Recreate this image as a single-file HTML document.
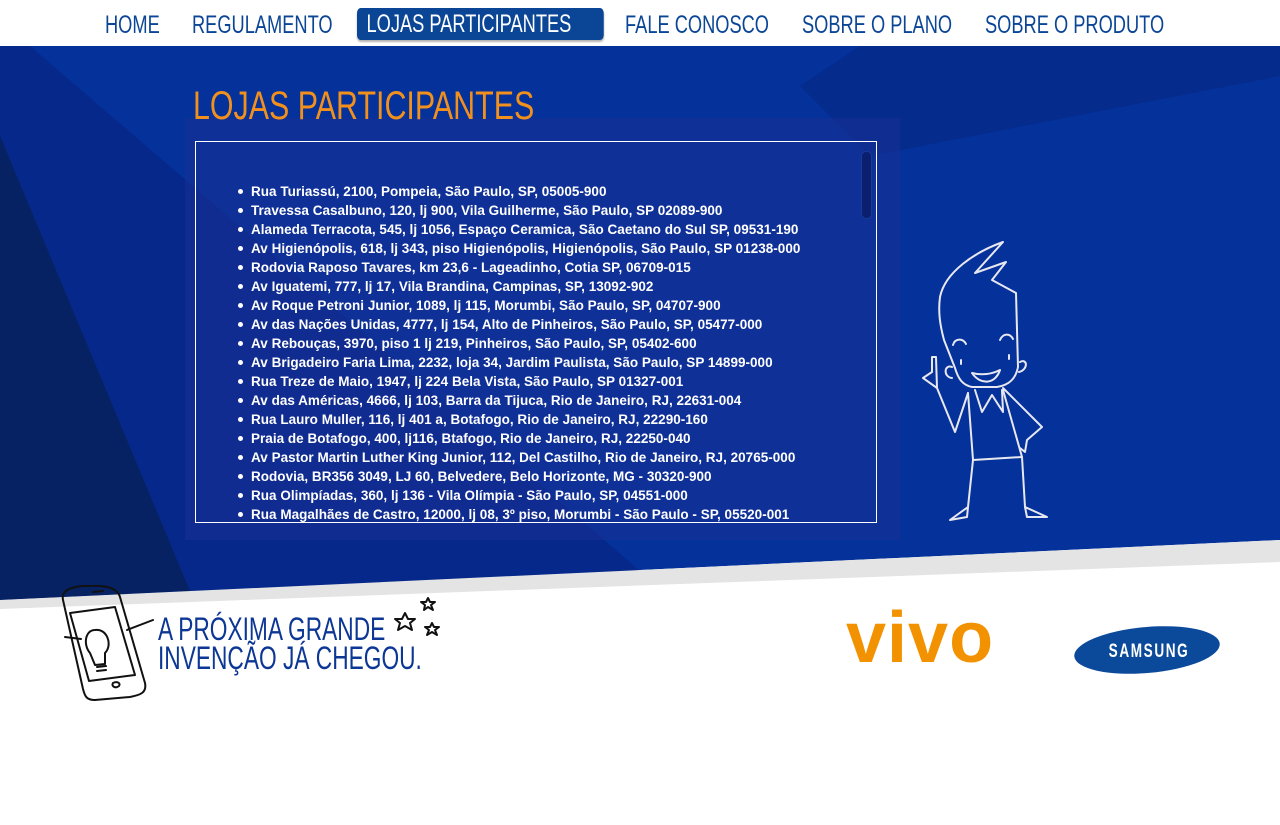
<!DOCTYPE html>
<html><head><meta charset="utf-8"><style>
*{margin:0;padding:0;box-sizing:border-box}
body{width:1280px;height:825px;background:#fff;position:relative;overflow:hidden;font-family:"Liberation Sans",sans-serif}
.nav{position:absolute;top:0;left:0;width:1280px;height:46px;background:#fff}
.nav span{position:absolute;top:9px;height:32px;line-height:32px;font-size:25px;color:#0a4596;transform-origin:0 0;transform:scaleX(0.73);white-space:nowrap}
.nav .act{background:#0a4596;color:#fff;border-radius:5px;padding:0 13px;box-shadow:0 2px 2px rgba(0,0,0,.3);top:8px;width:338px}
.title{position:absolute;left:193px;top:84px;font-size:40px;color:#f2901e;transform-origin:0 0;transform:scaleX(0.76);white-space:nowrap}
.box{position:absolute;left:195px;top:141px;width:682px;height:382px;border:1px solid #fff;overflow:hidden}
.box ul{position:absolute;left:42px;top:40px;list-style:none}
.box li{color:#fff;font-weight:bold;font-size:13.5px;line-height:19px;white-space:nowrap;letter-spacing:0.02px;position:relative;padding-left:13px}
.box li:before{content:"";position:absolute;left:0;top:7px;width:5px;height:5px;border-radius:50%;background:#fff}
.scroll{position:absolute;left:665px;top:9px;width:11px;height:68px;border-radius:5px;background:#0a1f6e;border:1px solid #1a3a9a}
.slogan{position:absolute;left:158px;top:615px;font-size:32px;line-height:29px;color:#0c3795;transform-origin:0 0;transform:scaleX(0.71);white-space:nowrap}
</style></head><body>
<svg style="position:absolute;left:0;top:46px" width="1280" height="580">
<polygon points="0,0 1280,0 1280,494 0,554" fill="#04319a"/>
<polygon points="0,0 30,0 640,525 0,554" fill="#05288a"/>
<polygon points="0,90 190,545 0,554" fill="#062263"/>
<polygon points="1280,0 1280,30 870,110 800,40 860,0" fill="#052a86" opacity=".7"/>
<rect x="185" y="72" width="715" height="422" fill="#1a3096" opacity=".55"/>
<polygon points="0,554 1280,494 1280,516 0,563" fill="#e4e4e4"/>
</svg>
<div class="nav">
<span style="left:105px">HOME</span>
<span style="left:192px">REGULAMENTO</span>
<span class="act" style="left:357px">LOJAS PARTICIPANTES</span>
<span style="left:625px">FALE CONOSCO</span>
<span style="left:802px">SOBRE O PLANO</span>
<span style="left:985px">SOBRE O PRODUTO</span>
</div>
<div class="title">LOJAS PARTICIPANTES</div>
<div class="box">
<div class="scroll"></div>
<ul>
<li>Rua Turiassú, 2100, Pompeia, São Paulo, SP, 05005-900</li>
<li>Travessa Casalbuno, 120, lj 900, Vila Guilherme, São Paulo, SP 02089-900</li>
<li>Alameda Terracota, 545, lj 1056, Espaço Ceramica, São Caetano do Sul SP, 09531-190</li>
<li>Av Higienópolis, 618, lj 343, piso Higienópolis, Higienópolis, São Paulo, SP 01238-000</li>
<li>Rodovia Raposo Tavares, km 23,6 - Lageadinho, Cotia SP, 06709-015</li>
<li>Av Iguatemi, 777, lj 17, Vila Brandina, Campinas, SP, 13092-902</li>
<li>Av Roque Petroni Junior, 1089, lj 115, Morumbi, São Paulo, SP, 04707-900</li>
<li>Av das Nações Unidas, 4777, lj 154, Alto de Pinheiros, São Paulo, SP, 05477-000</li>
<li>Av Rebouças, 3970, piso 1 lj 219, Pinheiros, São Paulo, SP, 05402-600</li>
<li>Av Brigadeiro Faria Lima, 2232, loja 34, Jardim Paulista, São Paulo, SP 14899-000</li>
<li>Rua Treze de Maio, 1947, lj 224 Bela Vista, São Paulo, SP 01327-001</li>
<li>Av das Américas, 4666, lj 103, Barra da Tijuca, Rio de Janeiro, RJ, 22631-004</li>
<li>Rua Lauro Muller, 116, lj 401 a, Botafogo, Rio de Janeiro, RJ, 22290-160</li>
<li>Praia de Botafogo, 400, lj116, Btafogo, Rio de Janeiro, RJ, 22250-040</li>
<li>Av Pastor Martin Luther King Junior, 112, Del Castilho, Rio de Janeiro, RJ, 20765-000</li>
<li>Rodovia, BR356 3049, LJ 60, Belvedere, Belo Horizonte, MG - 30320-900</li>
<li>Rua Olimpíadas, 360, lj 136 - Vila Olímpia - São Paulo, SP, 04551-000</li>
<li>Rua Magalhães de Castro, 12000, lj 08, 3º piso, Morumbi - São Paulo - SP, 05520-001</li>
</ul>
</div>
<svg style="position:absolute;left:0;top:0" width="1280" height="825" fill="none" stroke="#e8e8f0" stroke-width="2" stroke-linejoin="round" stroke-linecap="round">
<path d="M1003 242 C 975 252 945 272 940 297 C 938 312 940 325 944 340 L 955 368 C 958 378 962 385 972 387 L 997 387 C 1010 385 1016 378 1018 367 L 1016 293 L 992 280 L 1006 262 L 975 273 Z"/>
<path d="M952 367 C 944 364 943 377 952 378 M1020 362 C 1028 358 1028 370 1019 372"/>
<path d="M953 345 C 955 338 963 338 966 344 M1000 340 C 1003 333 1010 333 1013 339"/>
<path d="M961 360 L 961 364 M1009 355 L 1009 359"/>
<path d="M972 373 C 980 385 995 385 1000 370 C 990 375 980 375 972 373 Z"/>
<path d="M975 390 L 982 412 L 992 395 L 1003 412 L 1002 390"/>
<path d="M968 393 L 973 460 L 1022 457 L 1003 390 M1003 388 L 1042 427 L 1027 440 L 1025 452 L 1020 448"/>
<path d="M973 460 L 968 507 L 950 520 L 967 517 L 968 507 M1022 457 L 1025 507 L 1047 517 L 1027 517 L 1025 507"/>
<path d="M968 393 L 955 432 L 937 388 L 923 378 L 932 372 L 932 357 L 936 357 L 937 388"/>
</svg>
<svg style="position:absolute;left:55px;top:585px" width="390" height="120" fill="none" stroke="#111" stroke-width="2" stroke-linecap="round" stroke-linejoin="round">
<path d="M8 15 C 6 6 15 2 28 1 C 50 0 62 2 65 12 L 90 98 C 92 108 85 110 75 112 L 40 115 C 32 115 30 112 28 104 Z"/>
<path d="M15 28 L 60 22 L 80 90 L 34 96 Z"/>
<path d="M40 45 C 30 45 28 60 35 68 L 40 80 L 50 79 L 50 68 C 58 60 52 43 40 45 Z M42 82 L 51 81 M42 86 L 51 85"/>
<path d="M38 7 L 48 6 M58 98 C 62 96 66 98 64 101 C 60 104 56 101 58 98"/>
<path d="M72 45 L 98 35 M10 52 L 26 54"/>
<polygon points="373,13 375,17 380,17 376,20 378,25 373,22 369,25 370,20 366,17 371,17"/>
<polygon points="350,28 353,34 360,34 355,38 357,45 350,41 343,45 345,38 340,34 347,34"/>
<polygon points="377,38 379,42 384,42 380,45 382,50 377,47 372,50 374,45 370,42 375,42"/>
</svg>
<div class="slogan">A PRÓXIMA GRANDE<br>INVENÇÃO JÁ CHEGOU.</div>
<div style="position:absolute;left:846px;top:598px;font-size:72px;font-weight:bold;color:#f39200;letter-spacing:1px;line-height:80px">vivo</div>
<svg style="position:absolute;left:1072px;top:623px" width="150" height="54">
<ellipse cx="75" cy="27" rx="73" ry="23" transform="rotate(-5 75 27)" fill="#0b4a9b"/>
<text x="0" y="0" transform="translate(77 34) scale(0.8 1.15)" text-anchor="middle" fill="#fff" font-family="Liberation Sans" font-weight="bold" font-size="17" letter-spacing="2">SAMSUNG</text>
</svg>
</body></html>
